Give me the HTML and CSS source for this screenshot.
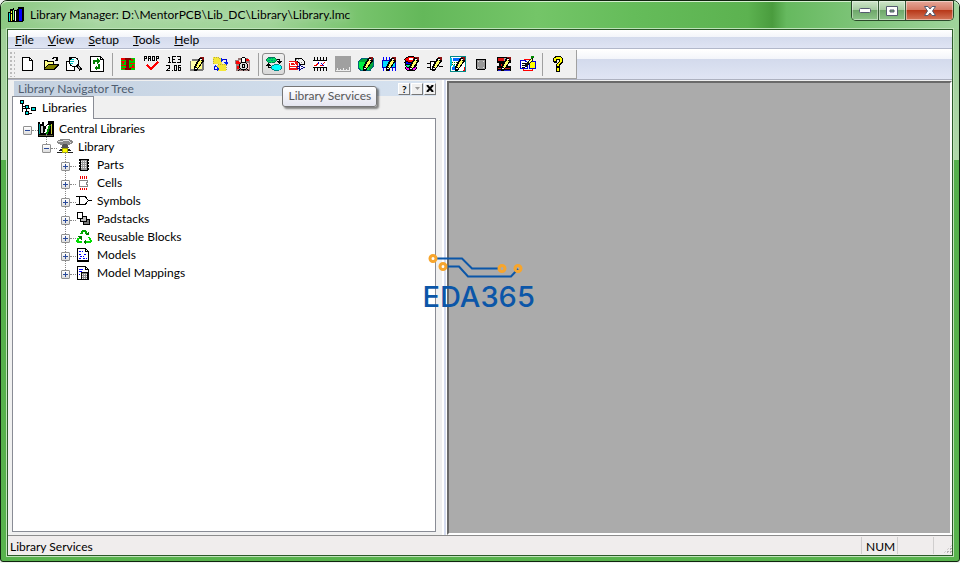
FILE: index.html
```html
<!DOCTYPE html>
<html lang="en">
<head>
<meta charset="utf-8">
<title>Library Manager</title>
<link rel="stylesheet" href="styles.css">
</head>
<body>
<svg class="defs" width="0" height="0" aria-hidden="true">
  <defs>
    <g id="pencil">
      <path d="M5 15V11L10 2L11 1H14L15 2V5L9 13L7 15Z" fill="#000"/>
      <path d="M7 11L10 5L11 4L13 5L9 12Z" fill="#ffff66"/>
      <path d="M11 3H13V4H11Z" fill="#fff"/>
      <path d="M11 1H15V4H13V2H11Z" fill="#8b1010"/>
      <path d="M6 12H8V13H6Z" fill="#fff"/>
    </g>
  </defs>
</svg>
<div class="window">
  <header class="titlebar">
    <svg class="icon" viewBox="0 0 16 16"><path d="M0 5H2V2H5V1H6V3H9V2H10V0H16V13L14 15H0Z" fill="#000"/><path d="M1 6H2V14H1Z" fill="#0dd"/><path d="M3 4H4V6H3ZM3 7H4V14H3Z" fill="#ff3"/><path d="M5 3H6V13H5Z" fill="#8f8"/><path d="M7 4H8V14H7Z" fill="#fff"/><path d="M11 2H14V14H11Z" fill="#00f"/></svg>
    <h1>Library Manager: D:\MentorPCB\Lib_DC\Library\Library.lmc</h1>
    <div class="caption">
      <button aria-label="Minimize"><svg width="12" height="6"><rect x=".5" y=".5" width="11" height="4" rx="1" fill="#fff" stroke="#555b70"/></svg></button>
      <button aria-label="Maximize"><svg width="12" height="10"><path d="M.5.5H11.500V9.500H.5ZM4 4V6H8V4Z" fill="#fff" fill-rule="evenodd" stroke="#555b70"/></svg></button>
      <button class="close" aria-label="Close"><svg width="12" height="10"><path d="M.5.5H4L6 3 8 .5H11.500L8.500 5 11.500 9.500H8L6 7 4 9.500H.5L3.500 5Z" fill="#fff" stroke="#555b70"/></svg></button>
    </div>
  </header>

  <div class="client">
    <nav class="menubar">
      <button><u>F</u>ile</button><button><u>V</u>iew</button><button><u>S</u>etup</button><button><u>T</u>ools</button><button><u>H</u>elp</button>
    </nav>

    <div class="toolrow">
      <div class="toolbar" role="toolbar">
        <span class="grip"></span>
        <button aria-label="New"><svg class="icon" viewBox="0 0 16 16"><path d="M2.500 1.500H9.500L12.500 4.500V14.500H2.500Z" fill="#fff" stroke="#000"/><path d="M9.500 2V4.500H12" fill="none" stroke="#000"/></svg></button>
        <button aria-label="Open"><svg class="icon" viewBox="0 0 16 16"><path d="M1 13V4H5V5H11V8H16V9L12 14H1Z" fill="#000"/><path d="M2 5H4V6H10V8H5L2 11Z" fill="#ff8"/><path d="M5 9H14L11 13H2Z" fill="#808000"/><path d="M9 2.500H10V1.500H13V2.500H14M14.500 1V5M12 4.500H15M13 3.500H15" stroke="#000" fill="none"/></svg></button>
        <button aria-label="Find"><svg class="icon" viewBox="0 0 16 16"><path d="M.5 5.500H3V1.500H8V14.500H.5Z" fill="#fff" stroke="#000"/><circle cx="8" cy="6" r="4.500" fill="#eff" stroke="#000"/><path d="M4 5.500H8M4 7.500H7M5 3.500H8" stroke="#0bb"/><path d="M11 9L15 14" stroke="#000" stroke-width="3"/><path d="M12 10L14 13" stroke="#999"/></svg></button>
        <button aria-label="Refresh"><svg class="icon" viewBox="0 0 16 16"><path d="M1.500.5H11.500L14.500 3.500V15.500H1.500Z" fill="#fff" stroke="#000"/><path d="M11.500 1V3.500H14" fill="none" stroke="#000"/><path d="M5 8V5H8M10 8V12H7" fill="none" stroke="#008000" stroke-width="2"/><path d="M8 2V8L11 5ZM8 9V15L5 12Z" fill="#008000"/></svg></button>
        <span class="sep"></span>
        <button aria-label="Partition editor"><svg class="icon" viewBox="0 0 16 16"><path d="M1 2H15V14H1Z" fill="#0c0"/><path d="M1 5.500H5M1 9.500H6M10 7.500H15M10 11.500H15M2 12.500H5" stroke="#f00"/><path d="M5 2H11V4H9V12H11V14H5V12H6V4H5Z" fill="#800"/><path d="M1 2H5V4H1ZM11 3H13V5H11ZM2 6H4V8H2ZM12 9H14V11H12Z" fill="#e00"/></svg></button>
        <button aria-label="Property definition"><svg class="icon wide" viewBox="0 0 16 16"><path d="M.5 5V.5H2.500V2.500H.5M4.500 5V.5H6.500V2.500H4.500M6.500 3V5M8.500.5H10.500V4.500H8.500ZM12.500 5V.5H14.500V2.500H12.500" fill="none" stroke="#000"/><path d="M3 9L7 13 14 6" fill="none" stroke="#f00" stroke-width="2"/></svg></button>
        <button aria-label="Units display"><svg class="icon" viewBox="0 0 16 16"><path d="M2 1.500H3.500V6.500M2 6.500H5M10 .5H6.500V6.500H10M7 3.500H9M11 .5H14.500V6.500H11M12 3.500H14M0 9.500H3.500V12L.5 14.500H4M6 13.500V15M8.500 9.500H10.500V14.500H8.500ZM15 9.500H12.500V14.500H14.500V11.500H12" fill="none" stroke="#000"/></svg></button>
        <button aria-label="Edit"><svg class="icon" viewBox="0 0 16 16"><path d="M1 5H3V3H12V5H15V14L13 15H1Z" fill="#777"/><path d="M2 5H8V13H2Z" fill="#ffa"/><path d="M9 5H13V13H9Z" fill="#ff8"/><use href="#pencil"/></svg></button>
        <button aria-label="Partition search paths"><svg class="icon" viewBox="0 0 16 16"><path d="M1 1H6V2H10V8H1ZM6 8H14V15H5V9H6Z" fill="#f4e838"/><path d="M1.500 7.500V1.500H6V2.500H10M6 8.500H14V14.500" fill="none" stroke="#bba840" stroke-dasharray="1 1"/><path d="M10 3.500H14.500V7M2.500 10V13.500H5" fill="none" stroke="#00c"/><path d="M12 6H16V7L14 9L12 7ZM1 11H5L3 9ZM9 2V6L11 4ZM5 15V11L7 13Z" fill="#02e"/></svg></button>
        <button aria-label="Snapshot"><svg class="icon" viewBox="0 0 16 16"><path d="M0 4H3V2H13V4H15V15H1V8H0Z" fill="#977"/><path d="M1 5H5V8H1ZM11 3H14V5H11ZM2 10H4V13H2Z" fill="#f00"/><path d="M4 4H7V6H4ZM12 7H14V13H12Z" fill="#fcc"/><circle cx="8.500" cy="4" r="2.500" fill="#fff" stroke="#000"/><circle cx="8.500" cy="10" r="4" fill="#ddd" stroke="#000"/><path d="M7.500 8.500H9.500V11.500H7.500ZM3 15L6 12M14 15L11 12" fill="none" stroke="#000"/></svg></button>
        <span class="sep"></span>
        <button class="hot" aria-label="Library Services" aria-describedby="tip"><svg class="icon wide" viewBox="0 0 18 16"><ellipse cx="6.500" cy="4" rx="5" ry="3" fill="#00e060" stroke="#075"/><path d="M3 4.500H10M4 2.500H8" stroke="#088" stroke-dasharray="2 1"/><ellipse cx="11.500" cy="11.500" rx="5" ry="3" fill="#0ff" stroke="#088"/><path d="M12 3.500H14.500V6M3.500 9V11.500H6" fill="none" stroke="#000"/><path d="M12 5H17L14.500 8ZM1 10H6L3.500 7Z" fill="#000"/></svg></button>
        <button aria-label="Symbol import"><svg class="icon" viewBox="0 0 16 16"><path d="M6 2H12L15 5V8H11L8 5H6Z" fill="#eee" stroke="#000"/><path d="M7 3.500H11M10 6.500H14" stroke="#888" stroke-dasharray="1 1"/><path d="M0 5H7L9 7V14H0Z" fill="#f01010"/><path d="M1 6.500H5L7 9.500H2ZM1 11.500H7" stroke="#fff" fill="none"/><path d="M10.500 9V14L15 11.500Z" fill="#fff" stroke="#008"/><path d="M8 10.500H10M8 12.500H10M14 11.500H16" stroke="#008"/></svg></button>
        <button aria-label="Cell editor"><svg class="icon" viewBox="0 0 16 16"><path d="M1 4H15V12H1Z" fill="#fff"/><path d="M2.500 1V4M5.500 1V4M8.500 1V4M11.500 1V4M14.500 1V4M2.500 12V15M5.500 12V15M8.500 12V15M11.500 12V15M14.500 12V15M1 4.500H15M1 11.500H15" stroke="#000"/><path d="M2 9.500H4L6 7.500M8 9.500H10L13 6" stroke="#e00" fill="none"/><path d="M6.500 6V8M9 7L12 10" stroke="#00d"/></svg></button>
        <button aria-label="Unavailable" disabled><svg class="icon" viewBox="0 0 16 16"><path d="M0 0H16V16H0Z" fill="#a0a0a0"/><path d="M1 14.500H15M2.500 12V15M5.500 13V15M8.500 12V15M11.500 13V15M14.500 11V15" stroke="#eee"/></svg></button>
        <button aria-label="Part editor"><svg class="icon" viewBox="0 0 16 16"><path d="M.5 5.500L4 2.500H15.500V10L12 14.500H3L.5 12Z" fill="#00a838" stroke="#067"/><path d="M1 6H11V14H3L1 12Z" fill="#00f040"/><use href="#pencil"/></svg></button>
        <button aria-label="Package cell editor"><svg class="icon" viewBox="0 0 16 16"><path d="M1.500 4.500H14.500V11.500H1.500Z" fill="#0df" stroke="#00b"/><path d="M2.500 1V4M5.500 1V4M8.500 1V4M11.500 1V4M14.500 1V4M2.500 12V15M5.500 12V15M8.500 12V15M11.500 12V15M14.500 12V15" stroke="#00f"/><use href="#pencil"/></svg></button>
        <button aria-label="Padstack editor"><svg class="icon" viewBox="0 0 16 16"><ellipse cx="7" cy="12" rx="5.500" ry="3" fill="#f0f" stroke="#000"/><ellipse cx="7" cy="9" rx="5.500" ry="2.500" fill="#00f0a0" stroke="#000"/><ellipse cx="7" cy="6.500" rx="6" ry="2.500" fill="#00f" stroke="#000"/><ellipse cx="7" cy="3.500" rx="6" ry="2.800" fill="#f00" stroke="#000"/><path d="M5 3H9" stroke="#fff" stroke-width="2"/><use href="#pencil"/></svg></button>
        <button aria-label="Symbol editor"><svg class="icon" viewBox="0 0 16 16"><path d="M3.500 5V13H8L12 9M0 7.500H3M0 11.500H3M12 10.500H16M4 5.500H8" stroke="#000" fill="none"/><path d="M4 6H9V13H4Z" fill="#fff"/><use href="#pencil"/></svg></button>
        <button aria-label="Layout template editor"><svg class="icon" viewBox="0 0 16 16"><path d="M.5.5H15.500V15.500H.5Z" fill="#fff" stroke="#088"/><path d="M3 2H13V5H3ZM2 11H8V14H2Z" fill="#06f"/><path d="M2 6.500H14M2 8.500H10" stroke="#080" stroke-dasharray="1 1"/><path d="M13 1.500H14.500V4M13 14.500H14.500V11" stroke="#e00" fill="none"/><path d="M1 2V10M4 9V11" stroke="#0bd" stroke-width="2"/><use href="#pencil"/></svg></button>
        <button aria-label="Pad"><svg class="icon" viewBox="0 0 16 16"><path d="M3.500 3.500H12.500V12.500L11.500 13.500H4.500L3.500 12.500Z" fill="#999" stroke="#000"/><path d="M5 5.500H6M10 5.500H11M5 11.500H6M10 11.500H11" stroke="#ddd"/></svg></button>
        <button aria-label="Board editor"><svg class="icon" viewBox="0 0 16 16"><path d="M1 1H15V7H1ZM3 7H12V10H3ZM1 10H15V15H1Z" fill="#000"/><path d="M2 2H8V5H2ZM5 8H8V10H5Z" fill="#d11"/><path d="M8 2H12V5H8Z" fill="#aaa"/><path d="M2 12.500H14" stroke="#b22"/><path d="M2 14.500H14" stroke="#22c"/><use href="#pencil"/></svg></button>
        <button aria-label="Model editor"><svg class="icon wide" viewBox="0 0 16 16"><path d="M4 3.500H12M4 14.500H12V12M3.500 12V15" stroke="#f00" fill="none"/><path d="M.5 4.500H5L7.500 6.500V12.500H.5Z" fill="#fff" stroke="#00c"/><path d="M2 7.500H6M2 9.500H6M2 11.500H5" stroke="#000"/><path d="M9.500 5.500H15.500V12.500H9.500Z" fill="#ff0" stroke="#00c"/><path d="M5 11V8L11 2H13V4L8 10Z" fill="#111"/><path d="M9 5L11 3 12 4 9 8Z" fill="#ff8"/><path d="M11 2L14 0" stroke="#080" stroke-width="2"/></svg></button>
        <span class="sep"></span>
        <button aria-label="Help"><svg class="icon" viewBox="0 0 16 16"><path d="M3 6V2H4V1H5V0H11V1H12V2H13V7H12V8H11V9H10V11H6V8H7V7H8V6H9V4H7V7H4V6ZM6 11H10V16H6Z" fill="#000"/><path d="M4 5V2H6V1H11V2H12V6H11V7H10V8H9V10H7V8H8V7H9V6H10V3H6V5ZM7 12H9V15H7Z" fill="#ff0"/></svg></button>
      </div>
    </div>

    <main class="workspace">
      <section class="dock">
        <header class="dockhead">
          <h2>Library Navigator Tree</h2>
          <button aria-label="Help">?</button><button class="dim" aria-label="Menu"><svg width="5" height="3"><path d="M0 0H5L2.500 3Z" fill="#999"/></svg></button><button aria-label="Close panel"><svg width="8" height="7"><path d="M1 0L7 7M7 0L1 7" stroke="#000" stroke-width="2"/></svg></button>
        </header>
        <div class="tabs" role="tablist">
          <button class="tab" role="tab" aria-selected="true"><svg class="icon" viewBox="0 0 16 16"><path d="M2.500 3V12M3 6.500H6M3 8.500H10M6.500 9V14M7 13.500H12" fill="none" stroke="#000"/><path d="M.5.5H3.500V3.500H.5ZM5.500 5.500H8.500V8.500H5.500ZM5.500 11.500H8.500V14.500H5.500ZM11.500 7.500H15.500V10.500H11.500Z" fill="#0dd" stroke="#000"/></svg>Libraries</button>
        </div>
        <div class="panel">
          <ul class="tree">
            <li>
              <div class="node"><button class="exp" aria-label="Collapse"></button><svg class="icon" viewBox="0 0 16 16"><path d="M0 1H2V3H4V1H6V5H8L10 2V0H16V16H0Z" fill="#000"/><path d="M1 3H2V13H1Z" fill="#099"/><path d="M3 5H5V12H3Z" fill="#ccc"/><path d="M6 12L9 4H11L8 12Z" fill="#fff"/><path d="M8 13L11 4H13L10 13Z" fill="#080"/><path d="M13 3H14V13H13Z" fill="#cc3"/><path d="M1 14.500H15" stroke="#553"/></svg><span>Central Libraries</span></div>
              <ul>
                <li>
                  <div class="node"><button class="exp" aria-label="Collapse"></button><svg class="icon" viewBox="0 0 16 16"><path d="M0 2L4 0H12L16 2V4L12 6 8 5 5 6 1 5Z" fill="#888"/><path d="M1 2.500H5L7 1.500H11L14 3.500" stroke="#ddd" fill="none"/><path d="M6 5H10L12 9H4Z" fill="#555"/><path d="M0 13.500H16M3 10.500H13M2 11.500H14" stroke="#222"/><path d="M5.500 9.500H10.500V13.500H5.500Z" fill="#ff0" stroke="#aa0"/></svg><span>Library</span></div>
                  <ul>
                    <li><div class="node"><button class="exp plus" aria-label="Expand"></button><svg class="icon" viewBox="0 0 16 16"><path d="M4 2H12V14H4Z" fill="#999"/><path d="M4.500 2V14M11.500 2V14M4 2.500H12M4 13.500H12" stroke="#000"/><path d="M3.500 2V14M12.500 2V14" stroke="#000" stroke-dasharray="2 1"/><path d="M5 4.500H11M5 6.500H11M5 8.500H11M5 10.500H11" stroke="#eee" stroke-dasharray="1 1"/></svg><span>Parts</span></div></li>
                    <li><div class="node"><button class="exp plus" aria-label="Expand"></button><svg class="icon" viewBox="0 0 16 16"><path d="M3.500 5.500H11.500V7.500H10.500V9.500H11.500V11.500H3.500Z" fill="#fff" stroke="#888"/><path d="M4.500 1V4M6.500 1V4M8.500 1V4M10.500 1V4M4.500 13V15M6.500 13V15M8.500 13V15M10.500 13V15" stroke="#e00"/></svg><span>Cells</span></div></li>
                    <li><div class="node"><button class="exp plus" aria-label="Expand"></button><svg class="icon" viewBox="0 0 16 16"><path d="M3.500 3.500H9L12.500 7.500 9 11.500H3.500Z" fill="#fff" stroke="#000"/><path d="M0 3.500H3M0 11.500H3M12 7.500H16" stroke="#000"/></svg><span>Symbols</span></div></li>
                    <li><div class="node"><button class="exp plus" aria-label="Expand"></button><svg class="icon" viewBox="0 0 16 16"><path d="M7.500 8.500H13.500V13.500H7.500Z" fill="#777" stroke="#000"/><path d="M4.500 5.500H10.500V10.500H4.500Z" fill="#bbb" stroke="#000"/><path d="M1.500 1.500H6.500V7.500H1.500Z" fill="#fff" stroke="#000"/></svg><span>Padstacks</span></div></li>
                    <li><div class="node"><button class="exp plus" aria-label="Expand"></button><svg class="icon" viewBox="0 0 16 16"><path d="M5 5L7 2H9L11 5" fill="none" stroke="#0a0" stroke-width="2"/><path d="M9 6H13V2Z" fill="#070"/><path d="M6 13H2L1 12 3 9M10 13H14L15 12 13 8" stroke="#0d0" stroke-width="2" fill="none"/><path d="M1 7H6V11ZM10 10V16L7 13Z" fill="#070"/></svg><span>Reusable Blocks</span></div></li>
                    <li><div class="node"><button class="exp plus" aria-label="Expand"></button><svg class="icon" viewBox="0 0 16 16"><path d="M1.500 1.500H9.500L12.500 4.500V13.500H1.500Z" fill="#fff" stroke="#000"/><path d="M9.500 1V4.500H13M1 14.500H13" stroke="#000" fill="none"/><path d="M3 4.500H7M3 7.500H6M8 7.500H11M4 9.500H8M3 11.500H5M7 11.500H11" stroke="#00f" stroke-dasharray="2 1"/></svg><span>Models</span></div></li>
                    <li><div class="node"><button class="exp plus" aria-label="Expand"></button><svg class="icon" viewBox="0 0 16 16"><path d="M1.500 1.500H9.500L12.500 4.500V14.500H1.500Z" fill="#fff" stroke="#000"/><path d="M9.500 1V4.500H13" stroke="#000" fill="none"/><path d="M3 4.500H7M3 6.500H6M3 9.500H4" stroke="#00f"/><path d="M5.500 7.500H11.500V14.500H5.500Z" fill="#888" stroke="#000"/><path d="M6 9.500H11M6 11.500H11M6 13.500H11" stroke="#eee" stroke-dasharray="1 1"/></svg><span>Model Mappings</span></div></li>
                  </ul>
                </li>
              </ul>
            </li>
          </ul>
        </div>
        <div class="tooltip" role="tooltip" id="tip">Library Services</div>
      </section>
      <div class="splitter"></div>
      <section class="mdi" aria-label="Document area"></section>
    </main>

    <footer class="status">
      <span class="message">Library Services</span><span class="cell">NUM</span><span class="cell"></span><span class="cell last"></span>
    </footer>
  </div>
  <div class="watermark">
    <svg width="96" height="26" viewBox="0 0 96 26"><path d="M8 5.500H34L44 15.500H72M18 13.500H31L40 23.500H83L90 16" fill="none" stroke="#0b56a8" stroke-width="2"/><g fill="none" stroke="#f7a52c" stroke-width="3"><circle cx="5" cy="5.500" r="3"/><circle cx="15" cy="13.500" r="3"/><circle cx="74" cy="15.500" r="3"/><circle cx="90" cy="15.500" r="3"/></g></svg>
    <span>EDA365</span>
  </div>
</div>
</body>
</html>
```
FILE: styles.css
```css
* { box-sizing: border-box; }

body {
  margin: 0;
  height: 100vh;
  background: #eef3ee;
  font: 12px/16px Lato, "Open Sans", sans-serif;
  color: #000;
}

.defs { position: absolute; }

button {
  margin: 0;
  padding: 0;
  border: 0;
  background: none;
  font: inherit;
  color: inherit;
}

h1, h2 { margin: 0; font: inherit; }
ul { margin: 0; padding: 0; list-style: none; }

.icon {
  display: block;
  flex: none;
  width: 16px;
  height: 16px;
  shape-rendering: crispEdges;
}

.icon.wide { width: 18px; }

.window {
  position: relative;
  display: flex;
  flex-direction: column;
  height: calc(100vh - 1px);
  padding: 0 6px 5px;
  border: 1px solid #10240f;
  border-radius: 7px 7px 3px 3px;
  background: linear-gradient(#9fd098 0 28px, #b0d6aa 159px, #55af4b 159px, #58b34d);
}

.titlebar {
  display: flex;
  flex: none;
  align-items: center;
  height: 28px;
  margin: 0 -6px;
  padding-left: 7px;
  background: linear-gradient(90deg, #8cc983, #a6d6a0 10%, #a0d498 28%, #75c26a 38%, #64b85a 44%, #74c568 56%, #65bc5a 66%, #5cb250 78%, #4a9c3e 80.500%, #66b95f 82%, #8ccb88 94%, #a0d49c);
  box-shadow: inset 0 1px #d5efd0;
  border-radius: 6px 6px 0 0;
}

.titlebar h1 { flex: 1; margin-left: 6px; text-shadow: 0 0 8px #fff9; }

.caption {
  display: flex;
  align-self: flex-start;
  height: 20px;
  margin-right: 5px;
  border: 1px solid #2a4a2a;
  border-top: 0;
  border-radius: 0 0 5px 5px;
  overflow: hidden;
}

.caption button {
  display: grid;
  place-items: center;
  width: 27px;
  border-right: 1px solid #365836;
  background: linear-gradient(#cfe6ca, #a8cda3 45%, #6fa86b 50%, #8cc488);
  box-shadow: inset 0 0 0 1px #ffffff70;
}

.caption .close {
  width: 47px;
  border: 0;
  background: linear-gradient(#e6a899, #d67c67 45%, #b8391a 50%, #d3765a);
}

.client {
  display: flex;
  flex: 1;
  flex-direction: column;
  min-height: 0;
  border: 1px solid #2b5a28;
  background: #f0f0f0;
  box-shadow: 0 0 0 1px #bfe3ba;
}

.menubar {
  display: flex;
  flex: none;
  gap: 14px;
  height: 19px;
  padding-left: 7px;
  border-bottom: 1px solid #b2b8ca;
  background: linear-gradient(#fff, #f3f5fa 7px, #d4dbed 7px, #dfe4f3);
}

.menubar button { line-height: 20px; }

.toolrow {
  flex: none;
  height: 31px;
  border-top: 1px solid #fff;
  border-bottom: 1px solid #adb1c0;
  background: linear-gradient(#fff, #f3f5fa 9px, #d3daec 9px, #e0e5f4);
}

.toolbar {
  display: flex;
  align-items: center;
  width: fit-content;
  height: 29px;
  padding-right: 7px;
  border-right: 1px solid #a0a0a0;
  border-bottom: 1px solid #a0a0a0;
  background: #f0f0f0;
}

.toolbar button {
  display: flex;
  align-items: center;
  justify-content: flex-start;
  width: 23px;
  height: 22px;
  padding-left: 4px;
}

.toolbar .hot {
  padding-left: 2px;
  border: 1px solid #8b8b8b;
  border-radius: 3px;
  background: linear-gradient(#f0f0f0, #d8d8d8);
}

.grip {
  width: 6px;
  height: 26px;
  margin: 0 1px;
  background: radial-gradient(circle at 2px 2px, #bbb 1px, #0000 1px) 0 0 / 4px 4px;
}

.sep {
  width: 1px;
  height: 23px;
  margin: 0 3px 0 4px;
  background: #a0a0a0;
}

.workspace {
  display: flex;
  flex: 1;
  min-height: 0;
}

.dock {
  position: relative;
  display: flex;
  flex: 0 0 46%;
  flex-direction: column;
  padding: 1px 6px 3px 4px;
}

.dockhead {
  display: flex;
  flex: none;
  align-items: center;
  gap: 1px;
  height: 15px;
  margin-left: 2px;
  padding-left: 4px;
  background: linear-gradient(90deg, #c4d1e0, #d6e2f0);
  color: #4f5d70;
}

.dockhead h2 { flex: 1; line-height: 15px; }

.dockhead button {
  display: grid;
  place-items: center;
  width: 12px;
  height: 12px;
  border: 1px solid;
  border-color: #fff #777 #777 #fff;
  background: #f0f0f0;
  color: #000;
  font-size: 10px;
  font-weight: bold;
  line-height: 10px;
}

.tabs { flex: none; height: 22px; }

.tab {
  position: relative;
  display: flex;
  align-items: center;
  gap: 6px;
  width: 82px;
  height: 23px;
  padding-left: 7px;
  border: 1px solid #898c95;
  border-bottom: 0;
  background: #fff;
}

.panel {
  flex: 1;
  min-height: 0;
  padding: 1px 0 0 10px;
  border: 1px solid #898c95;
  background: #fff;
}

.tree ul { padding-left: 19px; }
.tree li { position: relative; }

.node { display: flex; align-items: center; height: 18px; }
.node span { margin-left: 5px; }

.node .icon { margin-left: 6px; }

.node::before {
  content: "";
  position: absolute;
  top: 10px;
  left: 9px;
  width: 6px;
  border-top: 1px dotted #888;
}

.tree ul > li::after {
  content: "";
  position: absolute;
  top: -4px;
  left: 4px;
  height: 10px;
  border-left: 1px dotted #888;
}

.exp {
  width: 9px;
  height: 9px;
  margin-top: 2px;
  border: 1px solid #919191;
  border-radius: 1px;
  background:
    linear-gradient(#2b4b9b, #2b4b9b) center / 5px 1px no-repeat,
    linear-gradient(#fff, #ddd);
}

.exp.plus {
  background:
    linear-gradient(#2b4b9b, #2b4b9b) center / 5px 1px no-repeat,
    linear-gradient(#2b4b9b, #2b4b9b) center / 1px 5px no-repeat,
    linear-gradient(#fff, #ddd);
}

.tooltip {
  position: absolute;
  top: 6px;
  right: 65px;
  padding: 1px 5px 2px;
  border: 1px solid #767676;
  border-radius: 3px;
  background: linear-gradient(#fff, #e4e5f0);
  box-shadow: 2px 2px 2px #0007;
  color: #575757;
  white-space: nowrap;
}

.splitter {
  flex: none;
  width: 5px;
  border-left: 2px solid #fff;
  border-right: 1px solid #fff;
  background: #d6ddf0;
}

.mdi {
  flex: 1;
  margin-top: 1px;
  border: 2px solid;
  border-color: #696969 #fff #fff #696969;
  background: #ababab;
}

.status {
  display: flex;
  flex: none;
  height: 20px;
  border-top: 1px solid #8d8d8d;
  background: #f0eded;
  line-height: 21px;
}

.message { flex: 1; padding-left: 2px; }

.cell {
  width: 36px;
  margin: 1px 0;
  padding-left: 4px;
  border-left: 1px solid #d0cece;
  line-height: 19px;
}

.cell.last {
  display: flex;
  align-items: flex-end;
  justify-content: flex-end;
  width: 19px;
}

.cell.last::after {
  content: "";
  width: 9px;
  height: 9px;
  background: linear-gradient(#b5b2b2, #b5b2b2) 0 0 / 2px 2px;
  background: conic-gradient(#b5b2b2 90deg, #0000 0) 0 0 / 3px 3px;
  clip-path: polygon(100% 0, 100% 100%, 0 100%);
}

.watermark {
  position: absolute;
  top: 45%;
  left: 44%;
  color: #0b56a8;
  font: 500 29px/36px Inter, sans-serif;
}

.watermark svg { display: block; margin-left: 5px; }
.watermark span { display: block; }
```
